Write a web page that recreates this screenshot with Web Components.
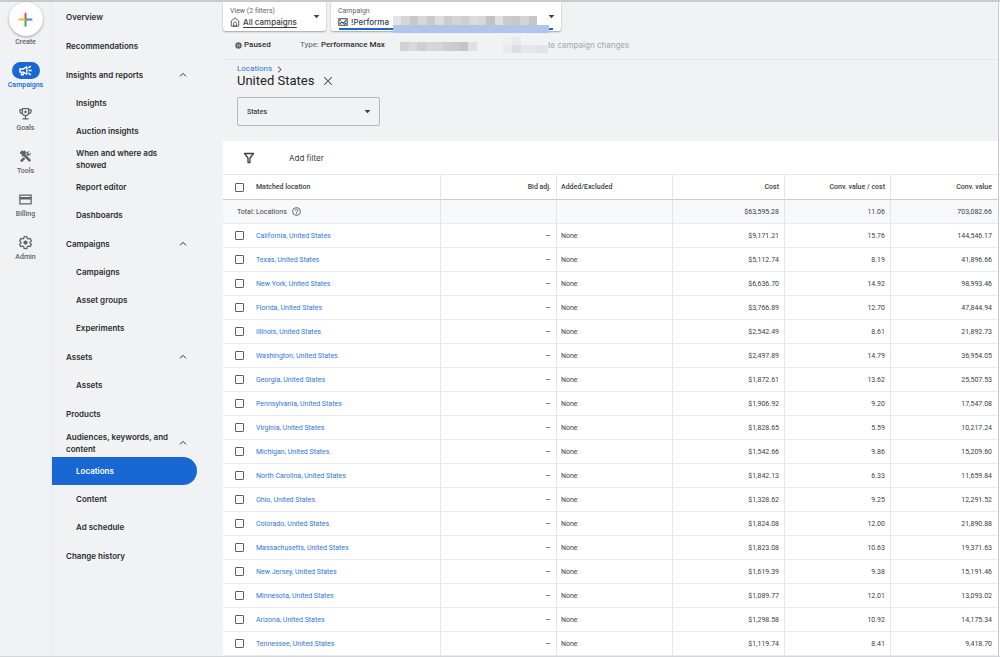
<!DOCTYPE html>
<html lang="en">
<head>
<meta charset="utf-8">
<title>Locations - Campaigns</title>
<style>
  :root {
    --ui: Inter, "Liberation Sans", sans-serif;
    --data: Roboto, "Liberation Sans", sans-serif;
    --surface: #f0f2f4;
    --ink: #2b2d30;
    --muted: #5f6368;
    --blue: #1967d2;
  }
  body { margin: 0; background: #fff; color: var(--ink); font-family: var(--data); }
</style>
</head>
<body>
<ads-app></ads-app>

<script>
const define = (name, html, setup) => {
  const template = document.createElement('template');
  template.innerHTML = html;
  customElements.define(name, class extends HTMLElement {
    connectedCallback() {
      if (this.shadowRoot) return;
      const root = this.attachShadow({ mode: 'open' });
      root.append(template.content.cloneNode(true));
      if (setup) setup(this, root);
    }
  });
};

/* Icon set, 24 unit grid */
const ICONS = {
  campaigns: '<path fill="none" stroke="currentColor" stroke-width="2.2" stroke-linejoin="round" d="M3 9.5h5.5L14 6v12l-5.500-3.500H3zM5.500 14.500V19h3v-4.500"/><path stroke="currentColor" stroke-width="2.200" d="M17 12h5M16.500 8l4-3M16.500 16l4 3"/>',
  goals: '<path fill="none" stroke="currentColor" stroke-width="2" d="M7 4h10v6.500a5 5 0 0 1-10 0zM7 6H3v2c0 2.500 1.700 4 4.200 4M17 6h4v2c0 2.500-1.700 4-4.200 4M12 15.500V20M7 20.500h10"/><path fill="currentColor" d="M12 6.500l.9 1.800 2 .3-1.400 1.400.3 2-1.800-1-1.800 1 .3-2-1.400-1.400 2-.3z"/>',
  tools: '<path fill="currentColor" d="M3 5.500 6.500 2l1.700 1.700L11 2.500l3 3-2.500 2.500 9.500 10-2.800 2.800L8.800 11 7.300 12.500 5.500 10.700l1-1.700L5 7.500l-1 1zM13.800 9.200c-.9-2.800 1.200-6 4.700-5.700l-2.500 2.700 2 2 2.700-2.500c.6 3.400-2.600 5.600-5.300 4.900zM10 13.500l1.800 1.900L6 21.200 3.200 18.400 8.300 13.400z"/>',
  billing: '<path fill="none" stroke="currentColor" stroke-width="2" d="M3 5h18v14H3z"/><path fill="currentColor" d="M3 8h18v4H3z"/>',
  admin: '<path fill="none" stroke="currentColor" stroke-width="2" stroke-linejoin="round" d="M9.800 2.500h4.400l.6 2.900 1.700 1 2.800-1 2.200 3.800-2.200 1.900v1.900l2.200 1.900-2.200 3.800-2.800-1-1.700 1-.6 2.900H9.800l-.6-2.900-1.700-1-2.800 1L2.500 14.900 4.700 13v-1.900L2.500 9.200l2.200-3.800 2.800 1 1.700-1z"/><circle cx="12" cy="12" r="3.400" fill="currentColor"/>',
  up: '<path fill="none" stroke="currentColor" stroke-width="3" d="M3 16l9-9 9 9"/>',
  right: '<path fill="none" stroke="currentColor" stroke-width="3.500" d="M7 2l10 10L7 22"/>',
  close: '<path stroke="currentColor" stroke-width="2.500" d="M3 3l18 18M21 3L3 21"/>',
  caret: '<path fill="currentColor" d="M2 7h20L12 18z"/>',
  home: '<path fill="none" stroke="currentColor" stroke-width="2" stroke-linejoin="round" d="M3 22V9.500L12 2l9 7.500V22z"/><path fill="none" stroke="currentColor" stroke-width="2" d="M8.500 22v-6.500a3.500 3.500 0 0 1 7 0V22z"/>',
  pmax: '<path fill="none" stroke="currentColor" stroke-width="2.500" d="M2 4h20v16H2z"/><path fill="none" stroke="currentColor" stroke-width="2.500" d="M4 17l5-5 4 3 7-8M4 9l3-3M15 18l5-4"/>',
  paused: '<circle cx="12" cy="12" r="11" fill="currentColor"/><path stroke="#c9cbce" stroke-width="2.500" d="M9 7v10M15 7v10"/>',
  filter: '<path fill="none" stroke="currentColor" stroke-width="2.600" stroke-linejoin="round" d="M3 3h18l-7 9v9h-4v-9z"/>',
  help: '<circle cx="12" cy="12" r="10.500" fill="none" stroke="currentColor" stroke-width="2"/><path fill="none" stroke="currentColor" stroke-width="2.200" d="M8.500 9.500a3.500 3.500 0 1 1 5.300 3c-1.300.8-1.800 1.300-1.800 2.700M12 16.800v2.400"/>',
  plus: '<path fill="#ea4335" d="M10.500 1h3v9.500l-1.500 1.500-1.500-1.500z"/><path fill="#4285f4" d="M23 10.500v3h-9.500L12 12l1.500-1.500z"/><path fill="#34a853" d="M10.500 23h3v-9.500L12 12l-1.500 1.500z"/><path fill="#fbbc04" d="M1 10.500v3h9.500L12 12l-1.500-1.500z"/>'
};
define('ui-icon', `
  <style>
    :host { display: block; flex: none; width: var(--size, 10px); height: var(--size, 10px); }
    svg { display: block; width: 100%; height: 100%; }
  </style>
  <svg viewBox="0 0 24 24" aria-hidden="true"></svg>`,
  (host, root) => { root.querySelector('svg').innerHTML = ICONS[host.getAttribute('name')] || ''; });

/* Censored strip: a row-by-row list of greys, one per block */
define('pixel-strip', `
  <style>
    :host { display: block; }
    svg { display: block; width: 100%; height: 100%; }
  </style>
  <svg preserveAspectRatio="none" shape-rendering="crispEdges" aria-hidden="true"></svg>`,
  (host, root) => {
    const rows = host.getAttribute('tones').split('/').map(r => r.trim().split(' '));
    const svg = root.querySelector('svg');
    svg.setAttribute('viewBox', `0 0 ${rows[0].length} ${rows.length}`);
    svg.innerHTML = rows.map((r, y) => r.map((c, x) =>
      `<rect x="${x}" y="${y}" width="1" height="1" fill="#${c}"/>`).join('')).join('');
  });

define('rail-item', `
  <style>
    :host { display: block; color: var(--muted); }
    a { display: flex; flex-direction: column; align-items: center; gap: 1px; color: inherit; text-decoration: none; font: 500 7px/10px var(--data); }
    .pill { display: grid; place-items: center; width: 28px; height: 17px; border-radius: 9px; --size: 15px; }
    :host([active]) { color: var(--blue); }
    :host([active]) .pill { background: var(--blue); color: #fff; }
  </style>
  <a href="#"><span class="pill"></span><slot></slot></a>`,
  (host, root) => {
    const icon = document.createElement('ui-icon');
    icon.setAttribute('name', host.getAttribute('icon'));
    root.querySelector('.pill').append(icon);
  });

define('app-rail', `
  <style>
    :host { display: flex; flex-direction: column; align-items: stretch; gap: 15px; width: 51px; flex: none; border-right: 1px solid #e6e8eb; }
    .create { display: flex; flex-direction: column; align-items: center; gap: 1px; padding: 0; border: 0; background: none; font: 500 7px/10px var(--data); color: var(--muted); }
    .disc { display: grid; place-items: center; width: 34px; height: 34px; border-radius: 50%; background: #fff; box-shadow: 0 1px 3px #0005; --size: 15px; }
  </style>
  <button class="create"><span class="disc"><ui-icon name="plus"></ui-icon></span>Create</button>
  <rail-item icon="campaigns" active>Campaigns</rail-item>
  <rail-item icon="goals">Goals</rail-item>
  <rail-item icon="tools">Tools</rail-item>
  <rail-item icon="billing">Billing</rail-item>
  <rail-item icon="admin">Admin</rail-item>`);

define('nav-item', `
  <style>
    :host { display: block; }
    a { display: flex; align-items: center; justify-content: space-between; box-sizing: border-box; min-height: 28px; margin-right: 26px; padding: 0 10px 0 24px; color: inherit; text-decoration: none; font: 600 8px/12px var(--ui); }
    :host([top]) a { min-height: 29px; padding-left: 14px; }
    :host([active]) a { background: var(--blue); color: #fff; border-radius: 0 14px 14px 0; }
    span { max-width: 108px; }
    ui-icon { --size: 8px; }
  </style>
  <a href="#"><span><slot></slot></span></a>`,
  (host, root) => {
    if (!host.hasAttribute('open')) return;
    const icon = document.createElement('ui-icon');
    icon.setAttribute('name', 'up');
    root.querySelector('a').append(icon);
  });

define('side-nav', `
  <style>
    :host { display: block; width: 171px; flex: none; }
  </style>
  <nav>
    <nav-item top>Overview</nav-item>
    <nav-item top>Recommendations</nav-item>
    <nav-item top open>Insights and reports</nav-item>
    <nav-item>Insights</nav-item>
    <nav-item>Auction insights</nav-item>
    <nav-item>When and where ads showed</nav-item>
    <nav-item>Report editor</nav-item>
    <nav-item>Dashboards</nav-item>
    <nav-item top open>Campaigns</nav-item>
    <nav-item>Campaigns</nav-item>
    <nav-item>Asset groups</nav-item>
    <nav-item>Experiments</nav-item>
    <nav-item top open>Assets</nav-item>
    <nav-item>Assets</nav-item>
    <nav-item top>Products</nav-item>
    <nav-item top open>Audiences, keywords, and content</nav-item>
    <nav-item active>Locations</nav-item>
    <nav-item>Content</nav-item>
    <nav-item>Ad schedule</nav-item>
    <nav-item top>Change history</nav-item>
  </nav>`);

define('scope-picker', `
  <style>
    :host { display: block; position: relative; }
    button { display: flex; align-items: center; justify-content: space-between; width: 100%; height: 29px; padding: 0 6px 0 7px; border: 0; border-radius: 0 0 3px 3px; background: #fff; box-shadow: 0 1px 2px #0005; color: #3c4043; text-align: left; }
    .label { display: block; font: 400 7px/10px var(--data); color: var(--muted); }
    .value { display: flex; align-items: center; gap: 3px; font: 500 8px/12px var(--ui); }
    .caret { --size: 7px; color: #3c4043; }
  </style>
  <button>
    <span><span class="label"></span><span class="value"><slot></slot></span></span>
    <ui-icon class="caret" name="caret"></ui-icon>
  </button>
  <slot name="cover"></slot>`,
  (host, root) => { root.querySelector('.label').textContent = host.getAttribute('label'); });

define('scope-bar', `
  <style>
    :host { display: block; border-bottom: 1px solid #e3e5e8; }
    .pickers { display: flex; gap: 5px; }
    .view { width: 103px; }
    .campaign { width: 230px; }
    .view span { text-decoration: underline; text-underline-offset: 2px; }
    .pickers ui-icon { --size: 10px; }
    .line { position: absolute; left: 8px; right: 8px; bottom: 1px; height: 2px; background: var(--blue); }
    .tint { position: absolute; left: 62px; right: 12px; bottom: -2px; height: 8px; background: #afc5ea; }
    .name { position: absolute; left: 62px; right: 24px; top: 14px; height: 9px; }
    .status { display: flex; align-items: center; height: 28px; padding-left: 12px; font: 500 8px/12px var(--data); }
    .state { display: flex; align-items: center; gap: 2px; width: 65px; }
    .state ui-icon { --size: 7px; color: #5f6368; }
    .type { width: 100px; white-space: nowrap; }
    .type span { font-weight: 400; color: var(--muted); }
    .hidden1 { width: 77px; height: 9px; margin-top: 2px; }
    .hidden2 { width: 45px; height: 16px; margin-left: 26px; }
    .changes { font: 400 8px/12px var(--ui); color: #a4a7ab; white-space: nowrap; }
  </style>
  <div class="pickers">
    <scope-picker class="view" label="View (2 filters)"><ui-icon name="home"></ui-icon><span>All campaigns</span></scope-picker>
    <scope-picker class="campaign" label="Campaign"><ui-icon name="pmax"></ui-icon><span>!Performa</span>
      <div slot="cover"><div class="line"></div><div class="tint"></div>
      <pixel-strip class="name" tones="e4e4e4 d6d6d6 c9c8c8 d8d7d6 cbcaca dddcdc cccccc d5d4d3 d0cfce dcdbda d8d7d6 c3c2c1 e0dfde cccbca c9c8c7 d5d4d3 c6c5c4"></pixel-strip></div>
    </scope-picker>
  </div>
  <div class="status">
    <div class="state"><ui-icon name="paused"></ui-icon>Paused</div>
    <div class="type"><span>Type:</span> Performance Max</div>
    <pixel-strip class="hidden1" tones="d0d2d3 d8dadb cccecf d5d7d8 d3d5d6 cccecf c9cbcc c2c4c5 dfe1e2"></pixel-strip>
    <pixel-strip class="hidden2" tones="edeff1 e8eaec f0f2f4 f0f2f4 f0f2f4/e8eaec dcdfe1 e5e7e9 e3e5e7 e1e3e6"></pixel-strip>
    <span class="changes">te campaign changes</span>
  </div>`);

define('page-heading', `
  <style>
    :host { display: block; padding: 4px 14px 15px; }
    .crumb { display: flex; align-items: center; gap: 4px; font: 400 8px/10px var(--data); --size: 7px; color: var(--muted); }
    .crumb a { color: #2f76dd; text-decoration: none; }
    .title { display: flex; align-items: center; gap: 9px; }
    h1 { margin: 0; font: 400 13px/14px var(--data); color: #202124; }
    .title button { padding: 0; border: 0; background: none; color: #3c4043; --size: 10px; }
    .field { position: relative; width: 143px; margin-top: 9px; color: #3c4043; }
    select { appearance: none; display: block; width: 100%; height: 29px; padding: 0 9px; border: 1px solid #b4b7bb; border-radius: 2px; background: transparent; color: inherit; font: 500 7px/12px var(--data); }
    .field ui-icon { --size: 7px; position: absolute; right: 9px; top: 11px; pointer-events: none; }
  </style>
  <div class="crumb"><a href="#">Locations</a><ui-icon name="right"></ui-icon></div>
  <div class="title"><h1>United States</h1><button aria-label="Clear location"><ui-icon name="close"></ui-icon></button></div>
  <div class="field"><select aria-label="Location level"><option>States</option></select><ui-icon name="caret"></ui-icon></div>`);

define('filter-bar', `
  <style>
    :host { display: flex; align-items: center; gap: 34px; height: 33px; padding-left: 20px; background: #fff; }
    ui-icon { --size: 12px; color: #3c4043; }
    button { padding: 0; border: 0; background: none; font: 400 8px/12px var(--ui); color: #3c4043; }
  </style>
  <ui-icon name="filter"></ui-icon><button>Add filter</button>`);

const ROWS = [
  ['California', '$9,171.21', '15.76', '144,546.17'],
  ['Texas', '$5,112.74', '8.19', '41,896.66'],
  ['New York', '$6,636.70', '14.92', '98,993.46'],
  ['Florida', '$3,766.89', '12.70', '47,844.94'],
  ['Illinois', '$2,542.49', '8.61', '21,892.73'],
  ['Washington', '$2,497.89', '14.79', '36,954.05'],
  ['Georgia', '$1,872.61', '13.62', '25,507.53'],
  ['Pennsylvania', '$1,906.92', '9.20', '17,547.08'],
  ['Virginia', '$1,828.65', '5.59', '10,217.24'],
  ['Michigan', '$1,542.66', '9.86', '15,209.60'],
  ['North Carolina', '$1,842.13', '6.33', '11,659.84'],
  ['Ohio', '$1,328.62', '9.25', '12,291.52'],
  ['Colorado', '$1,824.08', '12.00', '21,890.88'],
  ['Massachusetts', '$1,823.08', '10.63', '19,371.63'],
  ['New Jersey', '$1,619.39', '9.38', '15,191.46'],
  ['Minnesota', '$1,089.77', '12.01', '13,093.02'],
  ['Arizona', '$1,298.58', '10.92', '14,175.34'],
  ['Tennessee', '$1,119.74', '8.41', '9,418.70']
];
define('location-table', `
  <style>
    :host { display: block; background: #fff; }
    table { width: 100%; table-layout: fixed; border-collapse: separate; border-spacing: 0; border-top: 1px solid #e6e8eb; font: 400 7px/10px var(--data); color: #3c4043; }
    .c1 { width: 33px; } .c2 { width: 185px; } .c3, .c4 { width: 116px; } .c5 { width: 112px; } .c6 { width: 106px; } .c7 { width: 107px; }
    th, td { box-sizing: border-box; height: 24px; padding: 0 5px 0 4px; border-right: 1px solid #e3e5e8; border-bottom: 1px solid #e8eaec; text-align: right; vertical-align: middle; font-weight: 400; white-space: nowrap; }
    thead th { height: 25px; border-bottom-color: #c8cacd; font-weight: 500; }
    tr > :first-child:not([colspan]) { border-right: 0; padding: 0 0 0 12px; text-align: left; }
    tr > :last-child { border-right: 0; padding-right: 6px; }
    .l { text-align: left; }
    .name { padding-left: 0; text-align: left; }
    .total > * { background: #f7f8fa; }
    .total th { padding-left: 14px; text-align: left; }
    .total span { display: flex; align-items: center; gap: 5px; --size: 9px; }
    a { color: #2f76dd; text-decoration: none; }
    input { appearance: none; display: block; box-sizing: border-box; width: 9px; height: 9px; margin: 0; border: 1px solid #5f6368; border-radius: 1px; background: #fff; }
    input:checked { background: var(--blue); }
  </style>
  <table>
    <colgroup><col class="c1"><col class="c2"><col class="c3"><col class="c4"><col class="c5"><col class="c6"><col class="c7"></colgroup>
    <thead><tr><th><input type="checkbox" aria-label="Select all locations"></th><th class="name">Matched location</th><th>Bid adj.</th><th class="l">Added/Excluded</th><th>Cost</th><th>Conv. value / cost</th><th>Conv. value</th></tr></thead>
    <tbody>
      <tr class="total"><th colspan="2"><span>Total: Locations <ui-icon name="help"></ui-icon></span></th><td></td><td></td><td>$63,595.28</td><td>11.06</td><td>703,082.66</td></tr>
    </tbody>
  </table>`,
  (host, root) => {
    root.querySelector('tbody').insertAdjacentHTML('beforeend', ROWS.map(([state, cost, ratio, value]) =>
      `<tr><td><input type="checkbox" aria-label="Select ${state}"></td><td class="name"><a href="#">${state}, United States</a></td><td>—</td><td class="l">None</td><td>${cost}</td><td>${ratio}</td><td>${value}</td></tr>`).join(''));
  });

define('ads-app', `
  <style>
    :host { display: flex; box-sizing: border-box; min-height: 100vh; padding-right: 1px; border-top: 2px solid #c9cacc; border-bottom: 1px solid #d5d6d8; background: linear-gradient(var(--surface), var(--surface)) content-box, #fff; }
    main { flex: 1; min-width: 0; border-right: 1px solid #c9cacc; }
  </style>
  <app-rail></app-rail>
  <side-nav></side-nav>
  <main>
    <scope-bar></scope-bar>
    <page-heading></page-heading>
    <filter-bar></filter-bar>
    <location-table></location-table>
  </main>`);
</script>
</body>
</html>
